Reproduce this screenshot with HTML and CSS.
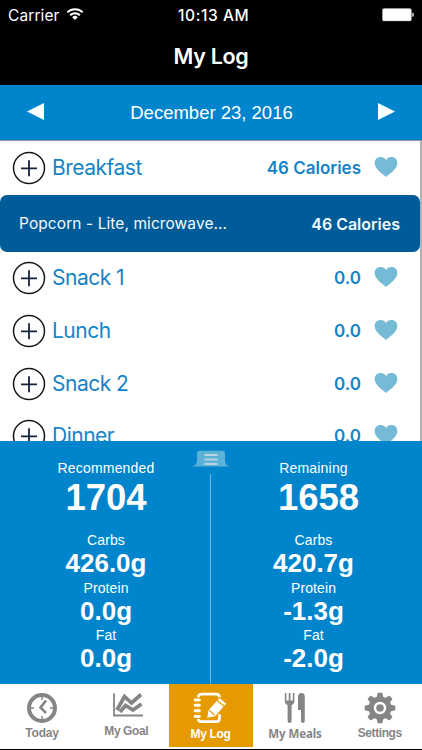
FILE: index.html
```html
<!DOCTYPE html>
<html lang="en">
<head>
<meta charset="utf-8">
<title>My Log</title>
<link rel="stylesheet" href="styles.css">
</head>
<body>
<svg class="defs" width="0" height="0">
  <symbol id="plus" viewBox="0 0 34 34"><circle cx="17" cy="17" r="15.5" fill="none" stroke="#17181c" stroke-width="1.5"/><path d="M9 17.3h16M17 9.3v16" stroke="#14233a" stroke-width="1.8"/></symbol>
  <symbol id="heart" viewBox="0 0 24 20"><path d="M12 20C9 17 1 12.500 .7 6.500C.5 2.500 3 0 6.500 0C9 0 11 1 12 3C13 1 15 0 17.500 0C21 0 23.500 2.500 23.300 6.500C23 12.500 15 17 12 20Z" fill="#75bbd5"/></symbol>
</svg>
<div class="app">
  <header class="top">
    <div class="status">
      <span class="carrier">Carrier</span>
      <svg class="wifi" width="18" height="14" viewBox="0 0 18 14"><g fill="none" stroke="#fff" stroke-width="2"><path d="M1.300 5.300a11 11 0 0 1 15.400 0"/><path d="M4.100 8.300a7 7 0 0 1 9.800 0"/></g><path d="M9 13L6.200 10.200a4 4 0 0 1 5.600 0Z" fill="#fff"/></svg>
      <span class="time">10:13 AM</span>
      <svg class="battery" width="32" height="14" viewBox="0 0 32 14"><rect x=".4" y=".6" width="29" height="12.300" rx="1.500" fill="#fff" stroke="#aaa" stroke-width=".5"/><path d="M30.300 4.500q1.500 .5 1.500 2.200t-1.500 2.200Z" fill="#fff"/></svg>
    </div>
    <h1 class="title">My Log</h1>
  </header>
  <nav class="datebar">
    <svg width="17" height="17" viewBox="0 0 17 17"><path d="M0 8.500L17 0V17Z" fill="#fff"/></svg>
    <span class="date">December 23, 2016</span>
    <svg width="17" height="17" viewBox="0 0 17 17"><path d="M17 8.500L0 0V17Z" fill="#fff"/></svg>
  </nav>
  <main class="list">
    <div class="row first"><svg class="plus"><use href="#plus"/></svg><span class="meal">Breakfast</span><b class="cal">46 Calories</b><svg class="heart"><use href="#heart"/></svg></div>
    <div class="entry"><span class="food">Popcorn - Lite, microwave...</span><b class="foodcal">46 Calories</b></div>
    <div class="row"><svg class="plus"><use href="#plus"/></svg><span class="meal">Snack 1</span><b class="cal">0.0</b><svg class="heart"><use href="#heart"/></svg></div>
    <div class="row"><svg class="plus"><use href="#plus"/></svg><span class="meal">Lunch</span><b class="cal">0.0</b><svg class="heart"><use href="#heart"/></svg></div>
    <div class="row"><svg class="plus"><use href="#plus"/></svg><span class="meal">Snack 2</span><b class="cal">0.0</b><svg class="heart"><use href="#heart"/></svg></div>
    <div class="row"><svg class="plus"><use href="#plus"/></svg><span class="meal">Dinner</span><b class="cal">0.0</b><svg class="heart"><use href="#heart"/></svg></div>
  </main>
  <section class="stats">
    <div class="col">
      <span class="label wide">Recommended</span><b class="total">1704</b>
      <span class="label">Carbs</span><b class="grams">426.0g</b>
      <span class="label">Protein</span><b class="grams">0.0g</b>
      <span class="label">Fat</span><b class="grams">0.0g</b>
    </div>
    <div class="middle">
      <svg class="handle" width="38" height="17" viewBox="0 0 38 17"><path d="M0 16.500Q5 15.500 5 10V3Q5 .7 7.500 .7H30.500Q33 .7 33 3V10Q33 15.500 38 16.500Z" fill="#5cb1d6"/><path d="M12.500 5h13M12.500 9.500h13M12.500 14h13" stroke="#b9d3df" stroke-width="2"/></svg>
      <div class="rule"></div>
    </div>
    <div class="col right">
      <span class="label wide">Remaining</span><b class="total">1658</b>
      <span class="label">Carbs</span><b class="grams">420.7g</b>
      <span class="label">Protein</span><b class="grams">-1.3g</b>
      <span class="label">Fat</span><b class="grams">-2.0g</b>
    </div>
  </section>
  <footer class="tabs">
    <div class="tab">
      <svg width="32" height="32" viewBox="0 0 32 32"><circle cx="16" cy="16" r="13" fill="none" stroke="#858585" stroke-width="4"/><path d="M16 3v5M16 24v5M3 16h5M24 16h5" stroke="#858585" stroke-width="1.500"/><path d="M20 8.500L14.500 15.500L20 21" fill="none" stroke="#858585" stroke-width="2.600"/></svg>
      <span>Today</span>
    </div>
    <div class="tab goal">
      <svg width="32" height="26" viewBox="0 0 32 26"><path d="M2 1.500V23.500H31" fill="none" stroke="#858585" stroke-width="1.800"/><path d="M5 18L12.500 4.500L19.500 11L29 2.500" fill="none" stroke="#858585" stroke-width="3.700"/><path d="M8 20L13.500 13.500L21 18L29.500 12" fill="none" stroke="#858585" stroke-width="3.700"/></svg>
      <span>My Goal</span>
    </div>
    <div class="tab active">
      <svg width="36" height="34" viewBox="0 0 34 32"><path d="M25 6V5Q25 2 22 2H8Q5 2 5 5V25Q5 28 8 28H22Q25 28 25 25V21" fill="none" stroke="#fff" stroke-width="2.600"/><g stroke="#e49a00" stroke-width="5"><path d="M1 7.500h6M1 12.500h6M1 17.700h6M1 23h6"/></g><g stroke="#fff" stroke-width="2.800" stroke-linecap="round"><path d="M2 7.500h4M2 12.500h4M2 17.700h4M2 23h4"/></g><path d="M14 17L25 5L32 11L21.500 23L13 25Z" fill="#fff" stroke="#e49a00" stroke-width="1"/><path d="M22.500 7.500L29.500 13.500M15 17L20.500 21.800" stroke="#e49a00" stroke-width="1.200"/></svg>
      <span>My Log</span>
    </div>
    <div class="tab meals">
      <svg width="22" height="32" viewBox="0 0 22 32"><path d="M.8 1V9Q.8 12 3.600 13V28.500Q3.600 31 5.600 31T7.600 28.500V13Q10.400 12 10.400 9V1H8.800V8.500H6.500V1H4.700V8.500H2.400V1ZM14 5Q14 1 17.500 1Q20.800 1 20.800 5V28.500Q20.800 31 18.900 31T17 28.500V18H14Z" fill="#858585"/></svg>
      <span>My Meals</span>
    </div>
    <div class="tab settings">
      <svg width="32" height="32" viewBox="0 0 32 32"><g fill="#858585"><path id="teeth" d="M12.500 6L13.700 .7H18.300L19.500 6V26L18.300 31.300H13.700L12.500 26Z"/><use href="#teeth" transform="rotate(45 16 16)"/><use href="#teeth" transform="rotate(90 16 16)"/><use href="#teeth" transform="rotate(135 16 16)"/><circle cx="16" cy="16" r="11.500"/></g><circle cx="16" cy="16" r="5" fill="#858585" stroke="#fff" stroke-width="2.400"/></svg>
      <span>Settings</span>
    </div>
  </footer>
</div>
</body>
</html>
```
FILE: styles.css
```css
* { box-sizing: border-box; }
body { margin: 0; }
.defs { display: block; }
.app { width: 422px; height: 750px; overflow: hidden; display: flex; flex-direction: column; background: #fff; font-family: Inter, sans-serif; white-space: nowrap; }
svg { display: block; flex: none; }
.top { height: 85px; flex: none; background: #000; color: #fff; }
.status { height: 30px; padding: 8px 8px 0; display: grid; grid-template-columns: 58px 112px 1fr 32px; align-items: start; }
.carrier { font-size: 15.5px; line-height: 15px; letter-spacing: .1px; }
.time { font-size: 15.5px; line-height: 15px; font-weight: 500; letter-spacing: .6px; }
.wifi { margin-top: -1px; }
.title { margin: 13px 0 0; text-align: center; font-size: 21.5px; line-height: 27px; font-weight: 600; letter-spacing: -.3px; }
.datebar { height: 56px; flex: none; padding: 18px 27px 0; display: flex; justify-content: space-between; background: #0084cb; border-bottom: 1px solid #8c98a2; color: #fff; font-family: "Liberation Sans", sans-serif; }
.date { font-size: 18.5px; line-height: 20px; padding-left: 1px; }
.list { height: 300px; flex: none; overflow: hidden; border-right: 2px solid #b2b2b2; }
.row { height: 52.7px; padding: 0 22px 0 11.5px; display: flex; align-items: center; color: #1683c7; }
.first { height: 53.5px; }
.plus { width: 34px; height: 34px; }
.meal { margin-left: 6.5px; font-size: 21px; line-height: 24px; letter-spacing: -.5px; }
.cal { margin-left: auto; font-size: 17px; line-height: 20px; font-weight: 600; }
.heart { width: 24px; height: 20px; margin: -2px 0 0 13px; }
.entry { height: 57.5px; padding: 1px 20px 0 19px; border-radius: 7px; display: flex; align-items: center; justify-content: space-between; background: #005c99; color: #f2faff; }
.food { font-size: 15.5px; letter-spacing: .08px; }
.foodcal { font-size: 16px; font-weight: 600; }
.stats { height: 243px; flex: none; display: grid; grid-template-columns: 192px 38px 192px; background: #0084cb; color: #fff; font-family: "Liberation Sans", sans-serif; }
.col { padding: 19px 0 0 20px; display: flex; flex-direction: column; align-items: center; }
.right { padding: 19px 25px 0 0; }
.label { font-size: 14px; line-height: 16px; letter-spacing: .1px; }
.wide { letter-spacing: .2px; }
.total { font-size: 36.5px; line-height: 42px; margin: 1px 0 13px; }
.right .total { margin-left: 10px; }
.grams { font-size: 26px; line-height: 31.500px; }
.middle { display: flex; flex-direction: column; align-items: center; padding: 9px 1px 0 0; }
.rule { flex: 1; width: 1px; margin-top: 7px; background: #6bb8e0; }
.tabs { height: 66px; flex: none; padding: 0 0 2px; display: grid; grid-template-columns: 84px 84.500px 84px 85px 84.500px; background: #fff; border-bottom: 1px solid #000; color: #858585; font: bold 12px/15px "Liberation Sans", sans-serif; letter-spacing: -.2px; }
.tab { padding-top: 8px; display: flex; flex-direction: column; align-items: center; }
.tab span { margin-top: auto; margin-bottom: 6px; }
.goal svg { margin-left: 3px; }
.goal span { margin-bottom: 8px; letter-spacing: -.4px; }
.active { background: #e49a00; color: #fff; }
.active span { margin-bottom: 5px; letter-spacing: -.35px; }
.meals span { font: bold 11.5px/15px "Noto Sans", sans-serif; letter-spacing: -.1px; }
.settings span { letter-spacing: -.4px; }
```
